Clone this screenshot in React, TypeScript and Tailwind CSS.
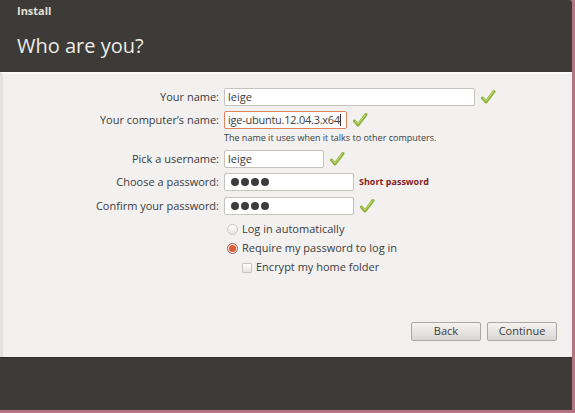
import React from 'react';

const font = { fontFamily: '"Open Sans", "DejaVu Sans", sans-serif' };

const Check: React.FC = () => (
  <svg width="16" height="16" viewBox="0 0 16 16" className="shrink-0">
    <path d="M2.5 9 L6 13 L14 2.5" fill="none" stroke="#8fb33a" strokeWidth="3" strokeLinecap="round" strokeLinejoin="round" />
    <path d="M3.2 9 L6 12 L13.2 3" fill="none" stroke="#c8e07c" strokeWidth="1" strokeLinecap="round" strokeLinejoin="round" />
  </svg>
);

const Dots: React.FC = () => (
  <div className="flex items-center gap-[2px] pl-[3px]">
    {[0, 1, 2, 3].map((i) => (
      <span key={i} className="w-[8px] h-[8px] rounded-full bg-[#3c3c3c]" />
    ))}
  </div>
);

const Field: React.FC<{ w: string; children?: React.ReactNode; focus?: boolean }> = ({ w, children, focus }) => (
  <div
    className={`${w} h-[18px] bg-white rounded-[2px] border flex items-center px-[3px] text-[11px] text-[#3c3c3c] whitespace-nowrap ${
      focus ? 'border-[#e0835a] px-[2px]' : 'border-[#c6c3be]'
    }`}
  >
    {children}
  </div>
);

const Row: React.FC<{ label: string; children: React.ReactNode }> = ({ label, children }) => (
  <div className="flex items-center h-[18px]">
    <div className="w-[224px] shrink-0 text-right pr-[5px] text-[11px] text-[#3c3c3c] whitespace-nowrap">{label}</div>
    <div className="flex items-center gap-[5px]">{children}</div>
  </div>
);

export default function App() {
  return (
    <div className="w-[575px] h-[413px] bg-[#b47480] overflow-hidden" style={font}>
      <div className="w-[572px] h-[410px] flex flex-col rounded-tr-[3px] overflow-hidden">
        <header className="h-[72px] bg-[#3c3b37] pl-[17px] flex flex-col">
          <div className="pt-[3px] text-[11px] font-bold text-[#e4e1da]">Install</div>
          <div className="mt-[16px] text-[20px] text-[#efece6] leading-none">Who are you?</div>
        </header>

        <main className="flex-1 bg-[#f2f1f0] border-t-2 border-[#fbfbfa] border-l-[3px] border-l-[#e4e2de] flex flex-col pt-[14px]">
          <div className="flex flex-col -ml-[3px]">
            <Row label="Your name:">
              <Field w="w-[251px]">leige</Field>
              <Check />
            </Row>
            <div className="h-[5px]" />
            <Row label="Your computer’s name:">
              <Field w="w-[123px]" focus>
                <span className="tracking-[-0.25px]">ige-ubuntu.12.04.3.x64</span>
                <span className="shrink-0 w-px h-[12px] bg-[#333]" />
              </Field>
              <Check />
            </Row>
            <div className="pl-[224px] pt-[2px] text-[9px] text-[#3c3c3c] h-[21px] whitespace-nowrap">
              The name it uses when it talks to other computers.
            </div>
            <Row label="Pick a username:">
              <Field w="w-[100px]">leige</Field>
              <Check />
            </Row>
            <div className="h-[5px]" />
            <Row label="Choose a password:">
              <Field w="w-[130px]">
                <Dots />
              </Field>
              <span className="text-[9px] font-bold text-[#861b1b]">Short password</span>
            </Row>
            <div className="h-[6px]" />
            <Row label="Confirm your password:">
              <Field w="w-[130px]">
                <Dots />
              </Field>
              <Check />
            </Row>

            <div className="pl-[227px] pt-[5px] flex flex-col text-[11px] text-[#3c3c3c]">
              <div className="flex items-center gap-[4px] h-[19px]">
                <span className="w-[11px] h-[11px] rounded-full border border-[#c9c6c1] bg-gradient-to-b from-white to-[#e6e4e0]" />
                <span>Log in automatically</span>
              </div>
              <div className="flex items-center gap-[4px] h-[19px]">
                <span className="w-[11px] h-[11px] rounded-full border border-[#b3564a] bg-[#f2f1f0] flex items-center justify-center">
                  <span className="w-[7px] h-[7px] rounded-full bg-[#dd5c37]" />
                </span>
                <span>Require my password to log in</span>
              </div>
              <div className="flex items-center gap-[4px] h-[19px] pl-[15px]">
                <span className="w-[10px] h-[10px] rounded-[1px] border border-[#c9c6c1] bg-gradient-to-b from-white to-[#e6e4e0]" />
                <span>Encrypt my home folder</span>
              </div>
            </div>
          </div>

          <div className="mt-auto mb-[16px] flex justify-end gap-[6px] pr-[15px]">
            <button className="w-[70px] h-[19px] rounded-[2px] border border-[#aaa7a2] bg-gradient-to-b from-[#f4f3f1] to-[#d9d7d3] text-[11px] text-[#3c3c3c]">
              Back
            </button>
            <button className="w-[70px] h-[19px] rounded-[2px] border border-[#aaa7a2] bg-gradient-to-b from-[#f4f3f1] to-[#d9d7d3] text-[11px] text-[#3c3c3c]">
              Continue
            </button>
          </div>
        </main>

        <footer className="h-[53px] bg-[#3c3b37] border-t border-[#2e2d2a]" />
      </div>
    </div>
  );
}
